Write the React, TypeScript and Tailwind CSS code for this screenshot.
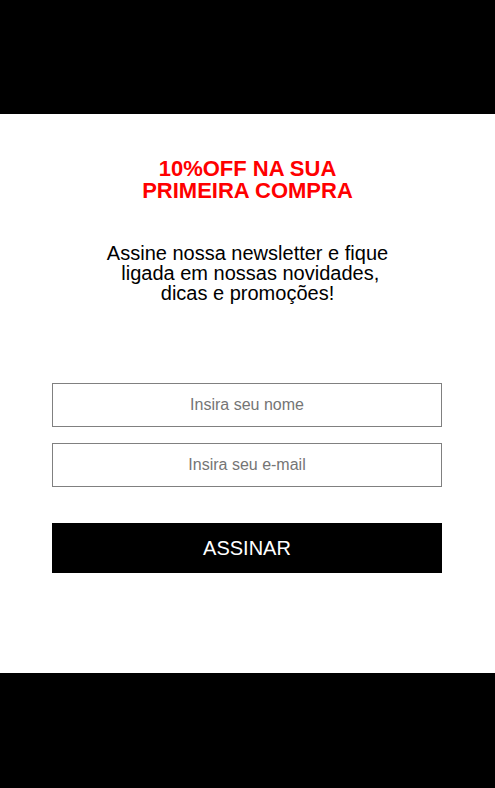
export default function App() {
  return (
    <div className="flex min-h-[788px] w-full flex-col bg-black font-['Liberation_Sans',Arial,sans-serif]">
      <div className="h-[114px] shrink-0 bg-black" />

      <section className="flex h-[559px] shrink-0 flex-col items-center bg-white">
        <h2 className="mt-[44px] text-center text-[22px] font-bold leading-[22px] text-[#ff0000]">
          10%OFF NA SUA
          <br />
          PRIMEIRA COMPRA
        </h2>

        <p className="mt-[41px] text-center text-[20px] leading-[20px] text-black">
          Assine nossa newsletter e fique
          <br />
          {"\u00a0"}ligada em nossas novidades,
          <br />
          dicas e promoções!
        </p>

        <form
          className="ml-[52px] mt-[80px] flex w-[390px] flex-col self-start"
          onSubmit={(e) => e.preventDefault()}
        >
          <input
            type="text"
            placeholder="Insira seu nome"
            className="h-[44px] w-full border border-[#808080] bg-white text-center text-[16px] text-black outline-none placeholder:text-[#757575]"
          />
          <input
            type="email"
            placeholder="Insira seu e-mail"
            className="mt-[16px] h-[44px] w-full border border-[#808080] bg-white text-center text-[16px] text-black outline-none placeholder:text-[#757575]"
          />
          <button
            type="submit"
            className="mt-[36px] h-[50px] w-full bg-black text-[20px] text-white"
          >
            ASSINAR
          </button>
        </form>
      </section>

      <div className="h-[115px] shrink-0 bg-black" />
    </div>
  );
}
